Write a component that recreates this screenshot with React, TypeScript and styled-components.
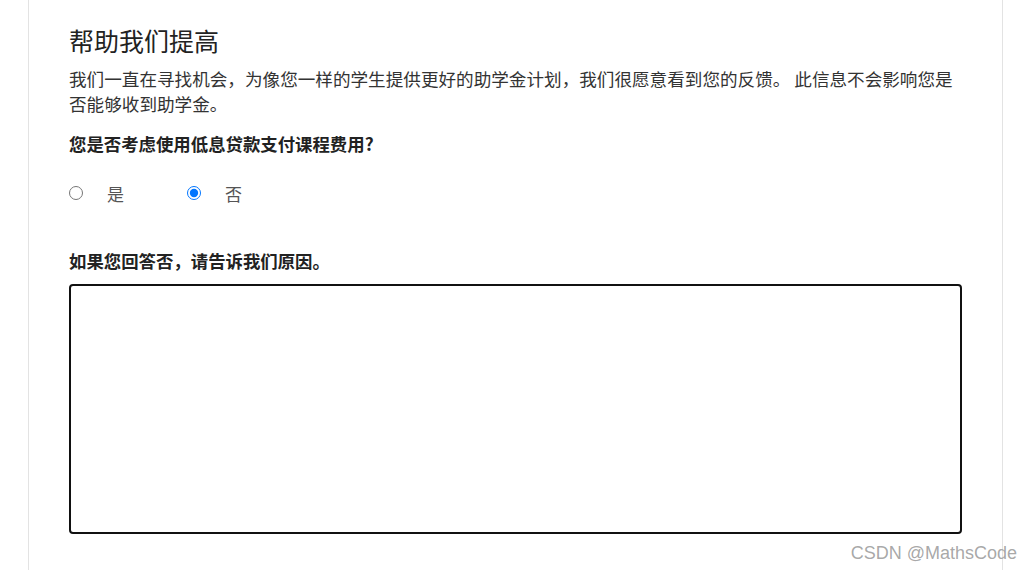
import React from "react";
import styled, { createGlobalStyle } from "styled-components";

const Global = createGlobalStyle`
  html, body { margin: 0; padding: 0; background: #ffffff; }
  body { font-family: "Noto Sans CJK SC", "Noto Sans", sans-serif; }
`;

const Page = styled.div`
  position: relative;
  min-height: 100vh;
  box-sizing: border-box;
`;

const Panel = styled.main`
  box-sizing: border-box;
  margin-left: 28px;
  width: 975px;
  min-height: 100vh;
  border-left: 1px solid #e3e3e3;
  border-right: 1px solid #e3e3e3;
  padding: 24px 40px 30px 40px;
  display: flex;
  flex-direction: column;
`;

const Title = styled.h1`
  margin: 0;
  font-size: 25px;
  line-height: 32px;
  font-weight: 400;
  color: #222;
`;

const Intro = styled.p`
  margin: 10px 0 0 0;
  font-size: 17.6px;
  line-height: 25px;
  letter-spacing: 0;
  color: #333;
`;

const Question = styled.h2<{ $gap: number }>`
  margin: ${(p) => p.$gap}px 0 0 0;
  font-size: 17.4px;
  line-height: 24px;
  font-weight: 700;
  color: #222;
`;

const RadioRow = styled.div`
  margin-top: 25px;
  height: 24px;
  display: flex;
  align-items: center;
`;

const Option = styled.label`
  display: flex;
  align-items: center;
  width: 118px;
  font-size: 17px;
  color: #555;
  cursor: pointer;
`;

const Radio = styled.input`
  margin: 0 24px 0 0;
  width: 14px;
  height: 14px;
  accent-color: #0075ff;
`;

const Answer = styled.textarea`
  margin-top: 11px;
  box-sizing: border-box;
  width: 893px;
  height: 250px;
  border: 2px solid #111;
  border-radius: 4px;
  padding: 3px 2px;
  resize: none;
  font-family: "Noto Sans CJK SC", sans-serif;
  font-size: 16px;
  line-height: 22px;
  outline: none;
  color: #222;
  caret-color: #111;
`;

const Watermark = styled.div`
  position: absolute;
  right: 15px;
  bottom: 6px;
  font-family: "Liberation Sans", Arial, sans-serif;
  font-size: 18px;
  color: rgba(130, 130, 130, 0.7);
  pointer-events: none;
`;

export default function App() {
  const [choice, setChoice] = React.useState("no");
  return (
    <Page>
      <Global />
      <Panel>
        <Title>帮助我们提高</Title>
        <Intro>
          我们一直在寻找机会，为像您一样的学生提供更好的助学金计划，我们很愿意看到您的反馈。 此信息不会影响您是否能够收到助学金。
        </Intro>
        <Question $gap={16}>您是否考虑使用低息贷款支付课程费用?</Question>
        <RadioRow>
          <Option>
            <Radio
              type="radio"
              name="loan"
              checked={choice === "yes"}
              onChange={() => setChoice("yes")}
            />
            是
          </Option>
          <Option>
            <Radio
              type="radio"
              name="loan"
              checked={choice === "no"}
              onChange={() => setChoice("no")}
            />
            否
          </Option>
        </RadioRow>
        <Question $gap={44}>如果您回答否，请告诉我们原因。</Question>
        <Answer autoFocus />
      </Panel>
      <Watermark>CSDN @MathsCode</Watermark>
    </Page>
  );
}
